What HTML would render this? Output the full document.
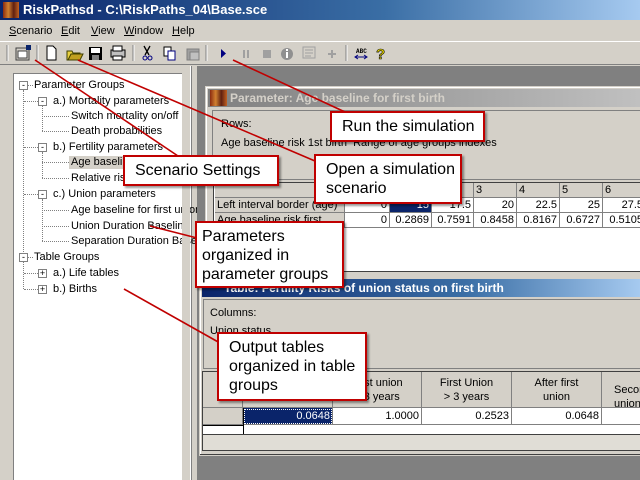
<!DOCTYPE html>
<html><head><meta charset="utf-8"><style>
*{margin:0;padding:0;box-sizing:border-box}
body{width:640px;height:480px;overflow:hidden;background:#d4d0c8;font-family:"Liberation Sans",sans-serif;font-size:11px;position:relative;color:#000}
.abs{position:absolute}
.title{left:0;top:0;width:640px;height:20px;background:linear-gradient(90deg,#0a246a,#3a6ea5 60%,#a6caf0);color:#fff;font-weight:bold;font-size:13px;line-height:20px;padding-left:23px}
.menu span{position:absolute;top:25px;font-size:11px}
.tb{top:41px;left:0;width:640px;height:24px;border-top:1px solid #fff;border-bottom:1px solid #808080}
.tree{left:13px;top:73px;width:170px;height:407px;background:#fff;border:1px solid #808080;border-right-color:#fff;border-bottom:none}
.tree div{position:absolute;white-space:nowrap;font-size:11px;line-height:13px}
.bx{position:absolute;width:9px;height:9px;border:1px solid #808080;background:#fff;font-size:9px;line-height:7px;text-align:center;z-index:2}
.vl{position:absolute;border-left:1px dotted #808080;width:0}
.hl{position:absolute;border-top:1px dotted #808080;height:0}
.mdi{left:197px;top:66px;width:443px;height:414px;background:#808080}
.win{background:#d4d0c8;border:1px solid #d4d0c8;box-shadow:inset -1px -1px #404040,inset 1px 1px #fff}
.cell{position:absolute;border-right:1px solid #808080;border-bottom:1px solid #808080;text-align:right;padding-right:2px;font-size:11px;line-height:14px;background:#fff}
.hd{background:#d4d0c8;text-align:left;padding-left:2px}
.call{position:absolute;background:#fff;border:2px solid #c00000;font-size:16px;line-height:19px;padding:4px 0 0 10px;box-shadow:2px 2px 2px rgba(0,0,0,.4)}
</style></head><body>
<div class="abs title">RiskPathsd - C:\RiskPaths_04\Base.sce</div>
<div class="abs" style="left:3px;top:2px;width:16px;height:16px;background:linear-gradient(90deg,#8b2b10,#d08030,#602010,#c06020)"></div>
<div class="menu"><span style="left:9px"><u>S</u>cenario</span><span style="left:61px"><u>E</u>dit</span><span style="left:91px"><u>V</u>iew</span><span style="left:124px"><u>W</u>indow</span><span style="left:172px"><u>H</u>elp</span></div>
<div class="abs tb"></div>
<svg class="abs" style="left:0;top:42px" width="400" height="22">
<line x1="7" y1="3" x2="7" y2="19" stroke="#808080"/><line x1="8" y1="3" x2="8" y2="19" stroke="#fff"/>
<rect x="16" y="6" width="13" height="12" fill="#d4d0c8" stroke="#404040"/><rect x="18" y="9" width="9" height="7" fill="#fff" stroke="#404040"/><rect x="26" y="3" width="5" height="5" fill="#0a246a"/>
<line x1="37" y1="3" x2="37" y2="19" stroke="#808080"/><line x1="38" y1="3" x2="38" y2="19" stroke="#fff"/>
<path d="M47 4h6l3 3v11h-9z" fill="#fff" stroke="#000"/>
<path d="M67 9h5l1 2h7v7h-13z" fill="#e8d040" stroke="#404000"/><path d="M68 18l3-6h12l-3 6z" fill="#c0a020" stroke="#404000"/>
<rect x="89" y="5" width="13" height="13" fill="#000"/><rect x="91" y="6" width="9" height="5" fill="#fff"/><rect x="92" y="13" width="7" height="5" fill="#808080"/>
<rect x="111" y="8" width="14" height="7" fill="#c0c0c0" stroke="#000"/><rect x="113" y="4" width="9" height="5" fill="#fff" stroke="#000"/><rect x="113" y="14" width="9" height="4" fill="#fff" stroke="#000"/>
<line x1="133" y1="3" x2="133" y2="19" stroke="#808080"/><line x1="134" y1="3" x2="134" y2="19" stroke="#fff"/>
<path d="M144 4l5 9M150 4l-5 9" stroke="#000" stroke-width="1.3"/><circle cx="145" cy="16" r="2" fill="none" stroke="#000080"/><circle cx="150" cy="16" r="2" fill="none" stroke="#000080"/>
<rect x="164" y="5" width="7" height="9" fill="#fff" stroke="#000"/><rect x="168" y="9" width="7" height="9" fill="#fff" stroke="#000080"/>
<rect x="187" y="7" width="12" height="11" fill="#a0a0a0" stroke="#808080"/><rect x="190" y="10" width="9" height="8" fill="#c0c0c0" stroke="#808080"/>
<line x1="206" y1="3" x2="206" y2="19" stroke="#808080"/><line x1="207" y1="3" x2="207" y2="19" stroke="#fff"/>
<path d="M221 7v9l5-4.5z" fill="#000080"/>
<rect x="243" y="8" width="2" height="8" fill="#a0a0a0"/><rect x="247" y="8" width="2" height="8" fill="#a0a0a0"/>
<rect x="263" y="8" width="8" height="8" fill="#a0a0a0"/>
<circle cx="287" cy="12" r="6" fill="#909090"/><rect x="286" y="10" width="2" height="6" fill="#fff"/><rect x="286" y="7" width="2" height="2" fill="#fff"/>
<rect x="303" y="5" width="12" height="11" fill="#d4d0c8" stroke="#a0a0a0"/><path d="M305 8h8M305 11h8M305 14h6" stroke="#a0a0a0"/>
<path d="M332 8v8M328 12h8" stroke="#a0a0a0" stroke-width="2"/>
<line x1="346" y1="3" x2="346" y2="19" stroke="#808080"/><line x1="347" y1="3" x2="347" y2="19" stroke="#fff"/>
<text x="356" y="11" font-size="6" font-family="Liberation Mono" font-weight="bold">ABC</text><path d="M355 15h12M358 13l-3 2 3 2M364 13l3 2-3 2" stroke="#000080" fill="none"/>
<text x="376" y="17" font-size="15" font-weight="bold" fill="#e0d000" stroke="#000" stroke-width=".6" font-family="Liberation Sans">?</text>
</svg>
<div class="abs" style="left:0;top:66px;width:197px;height:414px;background:#d4d0c8"></div>
<div class="abs" style="left:190px;top:66px;width:2px;height:414px;border-left:1px solid #fff;border-right:1px solid #808080"></div>
<div class="abs tree">
<span class="vl" style="left:9px;top:16px;height:166px"></span>
<span class="hl" style="left:14px;top:11px;width:5px"></span>
<span class="hl" style="left:10px;top:27px;width:14px"></span>
<span class="hl" style="left:10px;top:73px;width:14px"></span>
<span class="hl" style="left:10px;top:120px;width:14px"></span>
<span class="hl" style="left:14px;top:183px;width:5px"></span>
<span class="vl" style="left:28px;top:32px;height:25px"></span>
<span class="vl" style="left:28px;top:78px;height:26px"></span>
<span class="vl" style="left:28px;top:125px;height:42px"></span>
<span class="hl" style="left:28px;top:42px;width:27px"></span>
<span class="hl" style="left:28px;top:57px;width:27px"></span>
<span class="hl" style="left:28px;top:88px;width:27px"></span>
<span class="hl" style="left:28px;top:104px;width:27px"></span>
<span class="hl" style="left:28px;top:136px;width:27px"></span>
<span class="hl" style="left:28px;top:152px;width:27px"></span>
<span class="hl" style="left:28px;top:167px;width:27px"></span>
<span class="vl" style="left:9px;top:188px;height:27px"></span>
<span class="hl" style="left:10px;top:199px;width:14px"></span>
<span class="hl" style="left:10px;top:215px;width:14px"></span>
<div style="left:20px;top:5px">Parameter Groups</div><span class="bx" style="left:5px;top:7px">-</span>
<div style="left:39px;top:21px">a.) Mortality parameters</div><span class="bx" style="left:24px;top:23px">-</span>
<div style="left:57px;top:36px">Switch mortality on/off</div>
<div style="left:57px;top:51px">Death probabilities</div>
<div style="left:39px;top:67px">b.) Fertility parameters</div><span class="bx" style="left:24px;top:69px">-</span>
<div style="left:55px;top:82px;background:#d4d0c8;padding:0 2px">Age baseline for first birth</div>
<div style="left:57px;top:98px">Relative risks</div>
<div style="left:39px;top:114px">c.) Union parameters</div><span class="bx" style="left:24px;top:116px">-</span>
<div style="left:57px;top:130px">Age baseline for first union</div>
<div style="left:57px;top:146px">Union Duration Baseline</div>
<div style="left:57px;top:161px">Separation Duration Baseline</div>
<div style="left:20px;top:177px">Table Groups</div><span class="bx" style="left:5px;top:179px">-</span>
<div style="left:39px;top:193px">a.) Life tables</div><span class="bx" style="left:24px;top:195px">+</span>
<div style="left:39px;top:209px">b.) Births</div><span class="bx" style="left:24px;top:211px">+</span>
</div>
<div class="abs" style="left:182px;top:73px;width:8px;height:407px;background:#d4d0c8"></div>
<div class="abs mdi"></div>
<div class="abs win" style="left:205px;top:86px;width:440px;height:214px"></div>
<div class="abs" style="left:208px;top:89px;width:432px;height:18px;background:linear-gradient(90deg,#808080,#c0c0c0);color:#d4d0c8;font-weight:bold;font-size:12px;line-height:18px;padding-left:22px">Parameter: Age baseline for first birth</div>
<div class="abs" style="left:210px;top:90px;width:17px;height:16px;background:linear-gradient(90deg,#8b2b10,#d08030,#602010,#c06020)"></div>
<div class="abs" style="left:212px;top:110px;width:430px;height:70px;border:1px solid #808080;border-right:none"></div>
<div class="abs" style="left:221px;top:118px">Rows:</div>
<div class="abs" style="left:221px;top:137px">Age baseline risk 1st birth &nbsp;Range of age groups indexes</div>
<div class="abs" style="left:213px;top:182px;width:430px;height:90px;background:#fff;border:1px solid #404040;border-right:none"></div>
<div class="cell hd" style="left:215px;top:183px;width:130px;height:15px"></div>
<div class="cell hd" style="left:345px;top:183px;width:45px;height:15px">0</div>
<div class="cell hd" style="left:390px;top:183px;width:42px;height:15px">1</div>
<div class="cell hd" style="left:432px;top:183px;width:42px;height:15px">2</div>
<div class="cell hd" style="left:474px;top:183px;width:43px;height:15px">3</div>
<div class="cell hd" style="left:517px;top:183px;width:43px;height:15px">4</div>
<div class="cell hd" style="left:560px;top:183px;width:43px;height:15px">5</div>
<div class="cell hd" style="left:603px;top:183px;width:43px;height:15px">6</div>
<div class="cell hd" style="left:215px;top:198px;width:130px;height:15px">Left interval border (age)</div>
<div class="cell" style="left:345px;top:198px;width:45px;height:15px">0</div>
<div class="cell" style="left:390px;top:198px;width:42px;height:15px;background:#0a246a;color:#fff">15</div>
<div class="cell" style="left:432px;top:198px;width:42px;height:15px">17.5</div>
<div class="cell" style="left:474px;top:198px;width:43px;height:15px">20</div>
<div class="cell" style="left:517px;top:198px;width:43px;height:15px">22.5</div>
<div class="cell" style="left:560px;top:198px;width:43px;height:15px">25</div>
<div class="cell" style="left:603px;top:198px;width:43px;height:15px">27.5</div>
<div class="cell hd" style="left:215px;top:213px;width:130px;height:15px">Age baseline risk first birth</div>
<div class="cell" style="left:345px;top:213px;width:45px;height:15px">0</div>
<div class="cell" style="left:390px;top:213px;width:42px;height:15px">0.2869</div>
<div class="cell" style="left:432px;top:213px;width:42px;height:15px">0.7591</div>
<div class="cell" style="left:474px;top:213px;width:43px;height:15px">0.8458</div>
<div class="cell" style="left:517px;top:213px;width:43px;height:15px">0.8167</div>
<div class="cell" style="left:560px;top:213px;width:43px;height:15px">0.6727</div>
<div class="cell" style="left:603px;top:213px;width:43px;height:15px">0.5105</div>
<div class="abs win" style="left:199px;top:278px;width:446px;height:178px"></div>
<div class="abs" style="left:202px;top:279px;width:438px;height:18px;background:linear-gradient(90deg,#0a246a,#3a6ea5 60%,#a6caf0);color:#fff;font-weight:bold;font-size:12px;line-height:18px;padding-left:22px">Table: Fertility Risks of union status on first birth</div>
<div class="abs" style="left:203px;top:299px;width:437px;height:70px;border:1px solid #808080;border-right:none"></div>
<div class="abs" style="left:210px;top:307px">Columns:</div>
<div class="abs" style="left:210px;top:325px">Union status</div>
<div class="abs" style="left:202px;top:371px;width:438px;height:80px;background:#fff;border:1px solid #404040;border-right:none"></div>
<div class="cell hd" style="left:203px;top:372px;width:40px;height:36px"></div>
<div class="cell hd" style="left:243px;top:372px;width:90px;height:36px;text-align:center;padding:4px 0 0">Not in union<br>&nbsp;</div>
<div class="cell hd" style="left:333px;top:372px;width:89px;height:36px;text-align:center;padding:4px 0 0">First union<br>&lt; 3 years</div>
<div class="cell hd" style="left:422px;top:372px;width:90px;height:36px;text-align:center;padding:4px 0 0">First Union<br>&gt; 3 years</div>
<div class="cell hd" style="left:512px;top:372px;width:90px;height:36px;text-align:center;padding:4px 0 0">After first<br>union</div>
<div class="cell hd" style="left:602px;top:372px;width:60px;height:36px;text-align:left;padding:11px 0 0 12px">Second union</div>
<div class="cell hd" style="left:203px;top:408px;width:40px;height:17px"></div>
<div class="cell" style="left:243px;top:408px;width:90px;height:17px;background:#0a246a;color:#fff;outline:1px dotted #fff;outline-offset:-2px;line-height:16px">0.0648</div>
<div class="cell" style="left:333px;top:408px;width:89px;height:17px;line-height:16px">1.0000</div>
<div class="cell" style="left:422px;top:408px;width:90px;height:17px;line-height:16px">0.2523</div>
<div class="cell" style="left:512px;top:408px;width:90px;height:17px;line-height:16px">0.0648</div>
<div class="cell" style="left:602px;top:408px;width:40px;height:17px"></div>
<div class="abs" style="left:203px;top:425px;width:40px;height:1px;background:#000"></div>
<div class="abs" style="left:243px;top:408px;width:1px;height:26px;background:#000"></div>
<div class="abs" style="left:203px;top:434px;width:437px;height:16px;background:#e0ddd6;border-top:1px solid #404040"></div>
<svg class="abs" style="left:0;top:0" width="640" height="480">
<g stroke="#c00000" stroke-width="1.6">
<line x1="35" y1="60" x2="178" y2="156"/>
<line x1="78" y1="60" x2="322" y2="164"/>
<line x1="233" y1="60" x2="345" y2="112"/>
<line x1="150" y1="226" x2="197" y2="238"/>
<line x1="124" y1="289" x2="220" y2="343"/>
</g></svg>
<div class="call" style="left:330px;top:111px;width:155px;height:31px">Run the simulation</div>
<div class="call" style="left:123px;top:155px;width:156px;height:31px">Scenario Settings</div>
<div class="call" style="left:314px;top:154px;width:148px;height:50px">Open a simulation<br>scenario</div>
<div class="call" style="left:195px;top:221px;width:149px;height:67px;padding-left:5px">Parameters<br>organized in<br>parameter groups</div>
<div class="call" style="left:217px;top:332px;width:150px;height:69px;padding-left:10px">Output tables<br>organized in table<br>groups</div>
</body></html>
